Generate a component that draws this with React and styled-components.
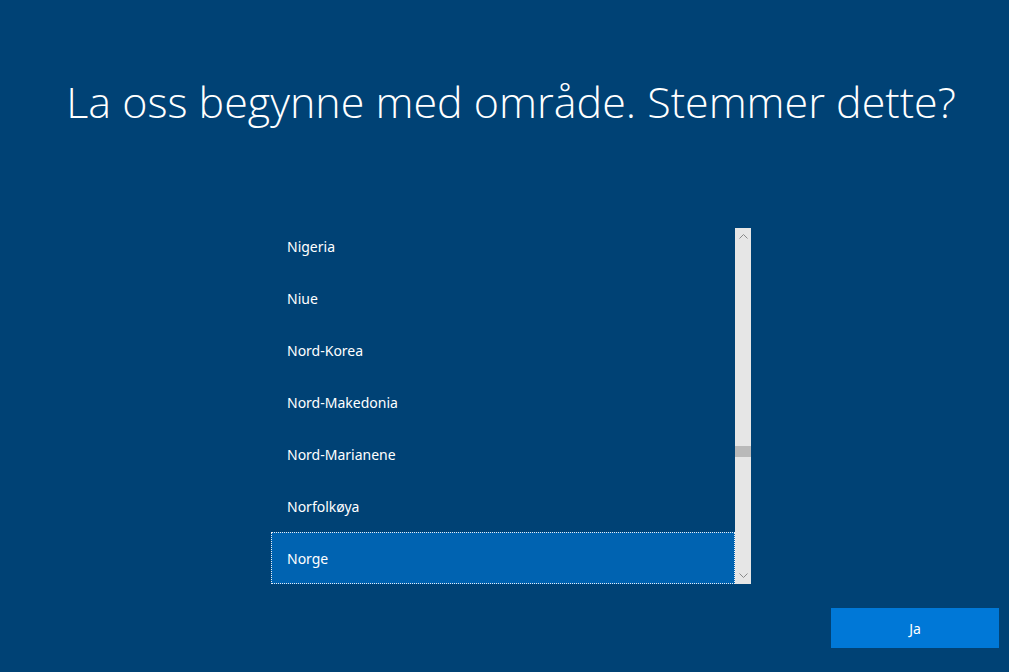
import styled, { createGlobalStyle } from 'styled-components';

const Global = createGlobalStyle`
  html, body {
    margin: 0;
    padding: 0;
    background: #004275;
  }
  body {
    font-family: "Noto Sans", "Open Sans", sans-serif;
    color: #fff;
  }
`;

const Page = styled.div`
  box-sizing: border-box;
  height: 672px;
  width: 1009px;
  display: flex;
  flex-direction: column;
  padding-left: 13px;
  background: #004275;
  overflow: hidden;
`;

const Title = styled.h1`
  margin: 0;
  padding-top: 73px;
  height: 228px;
  box-sizing: border-box;
  font-family: "Open Sans", sans-serif;
  font-weight: 300;
  font-size: 43px;
  line-height: 58px;
  text-align: center;
  white-space: nowrap;
`;

const Picker = styled.div`
  align-self: center;
  width: 480px;
  height: 356px;
  display: flex;
`;

const Viewport = styled.div`
  flex: 1;
  overflow: hidden;
`;

const List = styled.ul`
  list-style: none;
  margin: -8px 0 0;
  padding: 0;
`;

const Item = styled.li`
  box-sizing: border-box;
  height: 52px;
  display: flex;
  align-items: center;
  padding-left: 15px;
  font-size: 14px;
  color: #fff;
  background: ${p => (p.$selected ? '#0063b1' : 'transparent')};
  border: 1px dotted ${p => (p.$selected ? '#e8eef5' : 'transparent')};
`;

const Scrollbar = styled.div`
  width: 16px;
  background: #e6e6e6;
  display: flex;
  flex-direction: column;
`;

const Arrow = styled.div`
  height: 17px;
  display: flex;
  align-items: center;
  justify-content: center;
`;

const Track = styled.div`
  flex: 1;
  display: flex;
  flex-direction: column;
  padding-top: ${p => p.$offset}px;
`;

const Thumb = styled.div`
  height: 11px;
  background: #b9b9b9;
`;

const Footer = styled.div`
  display: flex;
  justify-content: flex-end;
  padding: 24px 10px 0 0;
`;

const Button = styled.button`
  width: 168px;
  height: 40px;
  border: none;
  background: #0078d7;
  color: #fff;
  font-family: "Noto Sans", "Open Sans", sans-serif;
  font-size: 14px;
  cursor: pointer;
`;

const countries = [
  'Nigeria',
  'Niue',
  'Nord-Korea',
  'Nord-Makedonia',
  'Nord-Marianene',
  'Norfolkøya',
  'Norge',
];

const Chevron = ({ up }) => (
  <svg width="9" height="5" viewBox="0 0 9 5">
    <path
      d={up ? 'M0.5 4.5 L4.5 0.5 L8.5 4.5' : 'M0.5 0.5 L4.5 4.5 L8.5 0.5'}
      fill="none"
      stroke="#8a8a8a"
      strokeWidth="1"
    />
  </svg>
);

export default function App() {
  return (
    <Page>
      <Global />
      <Title>La oss begynne med område. Stemmer dette?</Title>
      <Picker>
        <Viewport>
          <List>
            {countries.map(c => (
              <Item key={c} $selected={c === 'Norge'}>{c}</Item>
            ))}
          </List>
        </Viewport>
        <Scrollbar>
          <Arrow><Chevron up /></Arrow>
          <Track $offset={201}>
            <Thumb />
          </Track>
          <Arrow><Chevron /></Arrow>
        </Scrollbar>
      </Picker>
      <Footer>
        <Button>Ja</Button>
      </Footer>
    </Page>
  );
}
